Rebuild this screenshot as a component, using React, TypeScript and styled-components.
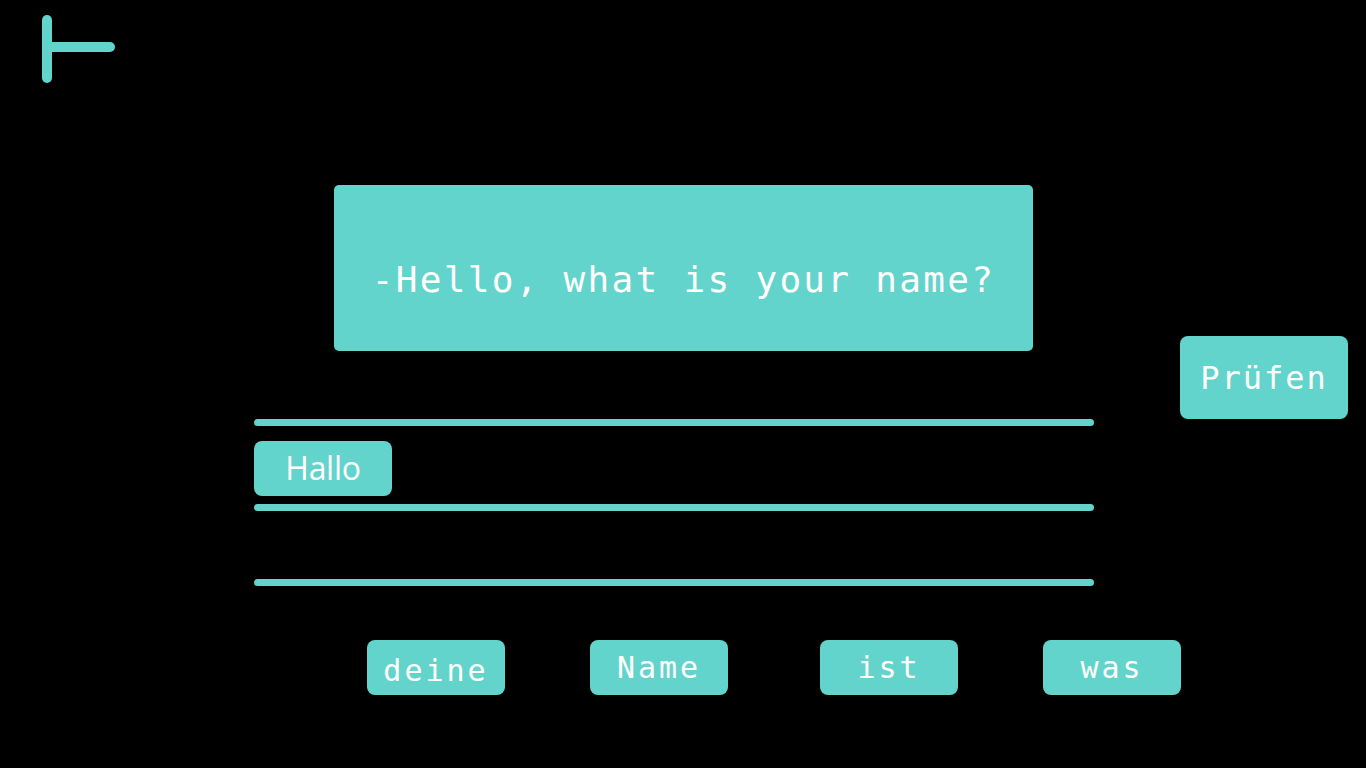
import React from "react";
import styled, { createGlobalStyle } from "styled-components";

const TEAL = "#62d4cb";

const GlobalStyle = createGlobalStyle`
  html, body { margin: 0; padding: 0; background: #000; }
  * { box-sizing: border-box; }
`;

const Page = styled.div`
  width: 1366px;
  min-height: 768px;
  background: #000;
  padding-top: 15px;
  font-family: "DejaVu Sans Mono", "Liberation Mono", monospace;
  color: #fff;
`;

const BackButton = styled.button`
  display: block;
  margin-left: 42px;
  width: 74px;
  height: 68px;
  padding: 0;
  border: 0;
  background: transparent;
  cursor: pointer;
`;

const QuestionCard = styled.div`
  width: 699px;
  height: 166px;
  margin: 102px 0 0 334px;
  background: ${TEAL};
  border-radius: 5px;
  display: flex;
  align-items: center;
  justify-content: center;
  padding-top: 22px;
  font-size: 36px;
  letter-spacing: 2.3px;
  white-space: pre;
`;

const AnswerRow = styled.div`
  display: flex;
  align-items: flex-start;
  margin-top: -15px;
  padding-left: 254px;
`;

const AnswerArea = styled.div`
  width: 840px;
  margin-top: 83px;
`;

const Rule = styled.div`
  height: 7px;
  border-radius: 4px;
  background: ${TEAL};
`;

const Slot = styled.div`
  min-height: 68px;
  padding: 15px 0 8px;
  display: flex;
  gap: 12px;
`;

const AnswerChip = styled.div`
  width: 138px;
  height: 55px;
  border-radius: 8px;
  background: ${TEAL};
  display: flex;
  align-items: center;
  justify-content: center;
  font-family: "Open Sans", "Noto Sans", sans-serif;
  font-size: 32px;
  letter-spacing: -0.3px;
  padding-bottom: 2px;
`;

const CheckButton = styled.button`
  margin-left: 86px;
  width: 168px;
  height: 83px;
  border: 0;
  border-radius: 8px;
  background: ${TEAL};
  color: #fff;
  font-family: "DejaVu Sans Mono", "Liberation Mono", monospace;
  font-size: 32px;
  letter-spacing: 2px;
  cursor: pointer;
  padding: 0;
`;

const WordBank = styled.div`
  display: flex;
  margin-top: 54px;
  padding-left: 367px;
`;

const WordChip = styled.button<{ $shift: number; $drop: number }>`
  margin-left: ${(p) => p.$shift}px;
  width: 138px;
  height: 55px;
  border: 0;
  border-radius: 8px;
  background: ${TEAL};
  color: #fff;
  font-family: "DejaVu Sans Mono", "Liberation Mono", monospace;
  font-size: 30px;
  letter-spacing: 3px;
  padding: ${(p) => p.$drop}px 0 0;
  cursor: pointer;
`;

const BackIcon = () => (
  <svg width="74" height="68" viewBox="0 0 74 68">
    <line x1="5" y1="5" x2="5" y2="63" stroke={TEAL} strokeWidth="10" strokeLinecap="round" />
    <line x1="5" y1="32" x2="68" y2="32" stroke={TEAL} strokeWidth="10" strokeLinecap="round" />
  </svg>
);

const words = [
  { text: "deine", shift: 0, drop: 6 },
  { text: "Name", shift: 85, drop: 0 },
  { text: "ist", shift: 92, drop: 0 },
  { text: "was", shift: 85, drop: 0 },
];

export default function App() {
  return (
    <Page>
      <GlobalStyle />
      <BackButton aria-label="Zurück">
        <BackIcon />
      </BackButton>
      <QuestionCard>-Hello, what is your name?</QuestionCard>
      <AnswerRow>
        <AnswerArea>
          <Rule />
          <Slot>
            <AnswerChip>Hallo</AnswerChip>
          </Slot>
          <Rule />
          <Slot />
          <Rule />
        </AnswerArea>
        <CheckButton>Prüfen</CheckButton>
      </AnswerRow>
      <WordBank>
        {words.map((w) => (
          <WordChip key={w.text} $shift={w.shift} $drop={w.drop}>
            {w.text}
          </WordChip>
        ))}
      </WordBank>
    </Page>
  );
}
